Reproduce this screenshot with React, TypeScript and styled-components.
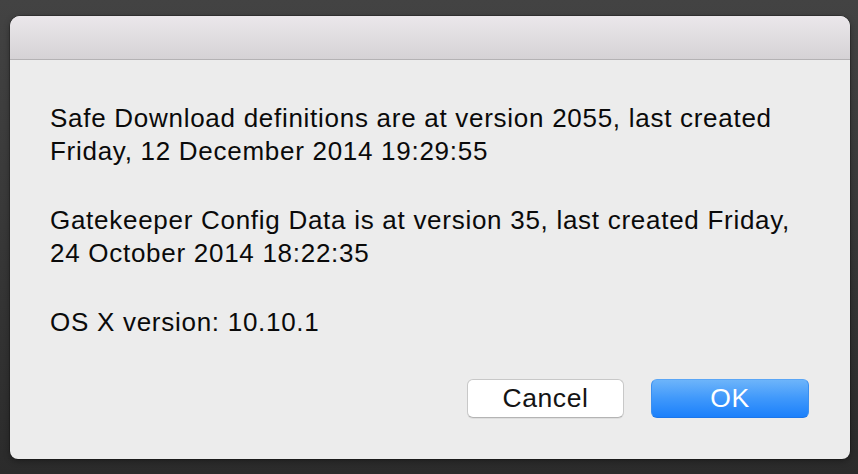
import React from "react";
import styled, { createGlobalStyle } from "styled-components";

const Global = createGlobalStyle`
  html, body {
    margin: 0;
    padding: 0;
    width: 858px;
    height: 474px;
    overflow: hidden;
  }
  body {
    background: linear-gradient(180deg, #434343 0%, #3a3a3a 40%, #2b2b2b 100%);
    font-family: "Liberation Sans", Arial, sans-serif;
  }
`;

const Stage = styled.div`
  width: 858px;
  height: 474px;
  box-sizing: border-box;
  padding: 16px 8px 15px 10px;
  display: flex;
`;

const Window = styled.div`
  flex: 1;
  display: flex;
  flex-direction: column;
  background: #ececec;
  border-radius: 10px 10px 8px 8px;
  overflow: hidden;
  box-shadow: 0 2px 6px rgba(0, 0, 0, 0.35), 0 0 0 0.5px rgba(0, 0, 0, 0.4);
`;

const TitleBar = styled.div`
  height: 43px;
  flex: none;
  background: linear-gradient(180deg, #ebe7eb 0%, #e0dde0 50%, #d5d2d5 100%);
  border-bottom: 1px solid #b4b2b4;
`;

const Body = styled.div`
  flex: 1;
  display: flex;
  flex-direction: column;
  padding: 42px 41px 41px 40px;
`;

const Message = styled.p`
  margin: 0 0 36px 0;
  font-size: 26px;
  letter-spacing: 0.72px;
  line-height: 33px;
  color: #0a0a0a;
  white-space: nowrap;
  &:last-of-type {
    margin-bottom: 0;
  }
`;

const ButtonRow = styled.div`
  margin-top: 40px;
  display: flex;
  justify-content: flex-end;
  gap: 27px;
`;

const Button = styled.button<{ $primary?: boolean }>`
  width: 157px;
  height: 39px;
  border-radius: 6px;
  font-family: "Liberation Sans", Arial, sans-serif;
  font-size: 26.5px;
  letter-spacing: 0.6px;
  padding: 0;
  display: flex;
  align-items: center;
  justify-content: center;
  box-sizing: border-box;
  ${(p) =>
    p.$primary
      ? `
    color: #ffffff;
    background: linear-gradient(180deg, #6db4fa 0%, #3f98fb 50%, #1b80fb 100%);
    border: 1px solid #3b8fef;
    border-top-color: #5aa6f6;
    border-bottom-color: #1b76ea;
    width: 158px;
  `
      : `
    color: #141414;
    background: #ffffff;
    border: 1px solid #c8c8c8;
    border-bottom-color: #b4b4b4;
    box-shadow: 0 1px 0 rgba(0,0,0,0.06);
  `}
`;

export default function App() {
  return (
    <>
      <Global />
      <Stage>
        <Window>
          <TitleBar />
          <Body>
            <Message>
              Safe Download definitions are at version 2055, last created
              <br />
              Friday, 12 December 2014 19:29:55
            </Message>
            <Message>
              Gatekeeper Config Data is at version 35, last created Friday,
              <br />
              24 October 2014 18:22:35
            </Message>
            <Message>OS X version: 10.10.1</Message>
            <ButtonRow>
              <Button>Cancel</Button>
              <Button $primary>OK</Button>
            </ButtonRow>
          </Body>
        </Window>
      </Stage>
    </>
  );
}
